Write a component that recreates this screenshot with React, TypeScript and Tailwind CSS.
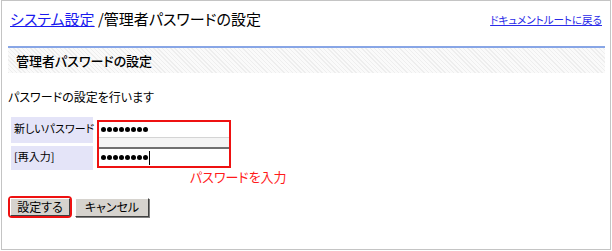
import React from 'react';

function Dots() {
  return (
    <div className="flex gap-[1px]">
      {[0, 1, 2, 3, 4, 5, 6, 7].map((i) => (
        <span key={i} className="block w-[5px] h-[5px] rounded-full bg-black" />
      ))}
    </div>
  );
}

export default function App() {
  return (
    <div className="w-[612px] h-[251px] bg-white text-black font-['Noto_Sans_CJK_JP',sans-serif] [font-feature-settings:'palt']">
      <div className="ml-[1px] w-[610px] h-[250px] border border-[#c4c4c4] pl-[6px] pr-[5px]">
        <div className="flex items-start justify-between h-[45px] pt-[7px] pl-[2px]">
          <div className="text-[15px] leading-[22px]">
            <a href="#" className="text-[#1a1aee] underline">システム設定</a> /管理者パスワードの設定
          </div>
          <a href="#" className="mt-[5px] mr-[3px] text-[10.5px] leading-[14px] text-[#2a2ae8] underline">
            ドキュメントルートに戻る
          </a>
        </div>

        <div className="border-t-2 border-[#88a6e6] h-[27px] flex items-center pl-[8px] text-[13px] font-medium bg-[repeating-linear-gradient(45deg,#eeeeee_0px,#eeeeee_1px,#fafafa_1px,#fafafa_3px)]">
          管理者パスワードの設定
        </div>

        <p className="mt-[16px] text-[12px] leading-[16px]">パスワードの設定を行います</p>

        <div className="mt-[12px] ml-[3px] flex gap-[4px]">
          <div className="flex flex-col gap-[3px] w-[82px] text-[11px] whitespace-nowrap">
            <div className="h-[26px] bg-[#e4e4f8] pl-[3px] pt-[3px]">新しいパスワード</div>
            <div className="h-[24px] bg-[#e4e4f8] pl-[3px] pt-[2px]">[再入力]</div>
          </div>
          <div className="relative w-[134px] pt-[4px] pl-[2px]">
            <div className="h-[17px] w-[130px] bg-white border-b border-[#d4d4d4] flex items-center pl-[2px]">
              <Dots />
            </div>
            <div className="h-[9px] w-[130px] bg-[#f4f4f4]" />
            <div className="h-[19px] w-[130px] bg-white border-t-2 border-[#707070] flex items-center pl-[2px]">
              <Dots />
              <span className="ml-[1px] block w-[1px] h-[14px] bg-black" />
            </div>
            <div className="absolute left-0 top-[3px] w-[134px] h-[48px] border-2 border-[#ee1111]" />
          </div>
        </div>

        <div className="ml-[182px] mt-[-1px] text-[13px] leading-[15px] text-[#ff1a1a]">パスワードを入力</div>

        <div className="mt-[12px] flex items-center gap-[3px]">
          <div className="border-2 border-[#ee1111] rounded-[4px]">
            <button className="block h-[18px] w-[60px] bg-[#d6d3ce] text-[12px] leading-[14px] border border-t-white border-l-white border-r-[#404040] border-b-[#404040]">
              設定する
            </button>
          </div>
          <button className="h-[19px] w-[74px] bg-[#d6d3ce] text-[12px] leading-[14px] border border-t-white border-l-white border-r-[#404040] border-b-[#404040] shadow-[1px_1px_0_#808080]">
            キャンセル
          </button>
        </div>
      </div>
    </div>
  );
}
